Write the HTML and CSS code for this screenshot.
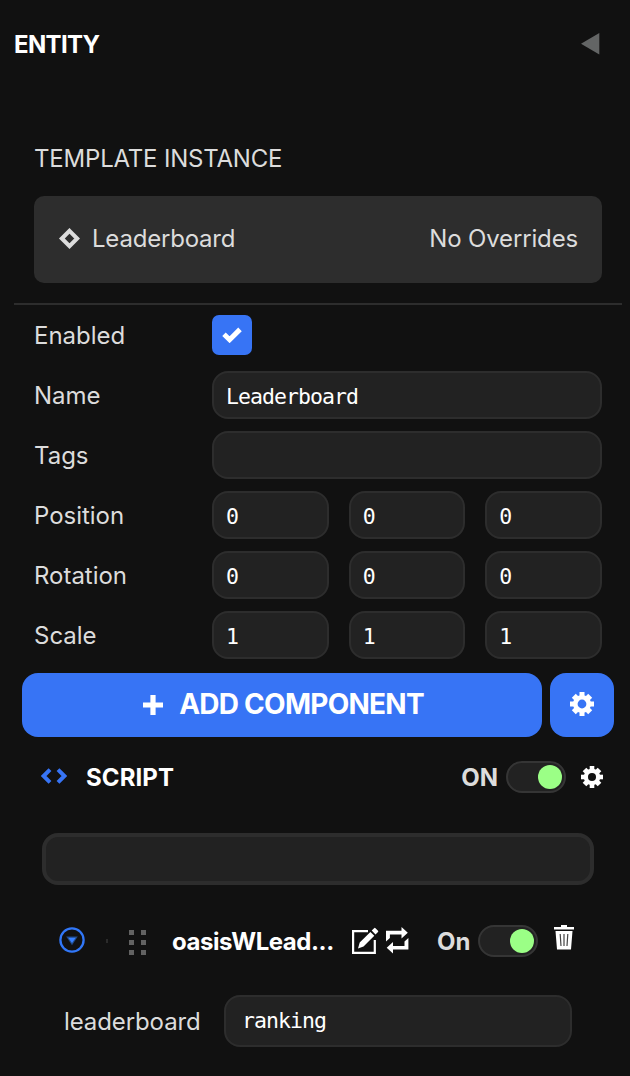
FILE: index.html
```html
<!DOCTYPE html>
<html lang="en">
<head>
<meta charset="utf-8">
<title>Entity</title>
<link rel="stylesheet" href="styles.css">
</head>
<body>
<svg class="defs" width="0" height="0" aria-hidden="true">
  <symbol id="gear" viewBox="-12 -12 24 24">
    <g fill="currentColor">
      <rect x="-2.5" y="-12" width="5" height="24"/>
      <rect x="-2.8" y="-11.6" width="5.6" height="23.2" transform="rotate(45)"/>
      <rect x="-2.5" y="-12" width="5" height="24" transform="rotate(90)"/>
      <rect x="-2.8" y="-11.6" width="5.6" height="23.2" transform="rotate(135)"/>
      <circle r="9"/>
    </g>
    <circle r="4.4" class="gear-hole"/>
  </symbol>
</svg>
<main class="panel">
  <header class="header">
    <h1 class="title">ENTITY</h1>
    <svg class="collapse" width="19" height="22" viewBox="0 0 19 22"><path d="M0 10.7 18.3 0V21.5Z" fill="#636565"/></svg>
  </header>

  <section class="template">
    <h2 class="template-title">TEMPLATE INSTANCE</h2>
    <div class="card">
      <svg class="diamond" width="22" height="22" viewBox="0 0 22 22"><path d="M11.5 2.85 19.15 10.5 11.5 18.15 3.85 10.5Z" fill="none" stroke="#dcdcdc" stroke-width="4.1"/></svg>
      <span class="card-name">Leaderboard</span>
      <span class="card-state">No Overrides</span>
    </div>
  </section>

  <section class="fields">
    <div class="row"><span class="label">Enabled</span><span class="check"><svg width="20" height="16" viewBox="0 0 20 16"><path d="M2 7.3 7.6 12.7 18 2.4" fill="none" stroke="#fff" stroke-width="5"/></svg></span></div>
    <div class="row"><span class="label">Name</span><span class="input">Leaderboard</span></div>
    <div class="row"><span class="label">Tags</span><span class="input"></span></div>
    <div class="row"><span class="label">Position</span><span class="input">0</span><span class="input">0</span><span class="input">0</span></div>
    <div class="row"><span class="label">Rotation</span><span class="input">0</span><span class="input">0</span><span class="input">0</span></div>
    <div class="row"><span class="label">Scale</span><span class="input">1</span><span class="input">1</span><span class="input">1</span></div>
  </section>

  <div class="actions">
    <div class="button add"><svg width="20" height="20" viewBox="0 0 20 20"><path d="M10 0V20M0 10H20" stroke="#fff" stroke-width="5.2"/></svg><span class="add-text">ADD COMPONENT</span></div>
    <div class="button cog"><svg width="24" height="24"><use href="#gear"/></svg></div>
  </div>

  <section class="component">
    <div class="component-head">
      <svg class="code" width="26" height="16" viewBox="0 0 26 16"><path d="M9 1.6 2.6 8 9 14.4M17 1.6 23.4 8 17 14.4" fill="none" stroke="#3774f5" stroke-width="4"/></svg>
      <span class="component-name">SCRIPT</span>
      <span class="state">ON</span>
      <span class="toggle"></span>
      <svg class="small-gear" width="22" height="22"><use href="#gear"/></svg>
    </div>
    <div class="script-search"></div>
    <div class="script-row">
      <svg class="expand" width="26" height="26" viewBox="0 0 26 26"><circle cx="13" cy="13" r="11.6" fill="none" stroke="#3177f8" stroke-width="2.3"/><path d="M7.2 9.5H18.8L13 18.2Z" fill="#204986"/><path d="M9.2 10.7H16.8L13 16Z" fill="#3780ff"/></svg>
      <span class="tick"></span>
      <svg class="grip" width="18" height="26" viewBox="0 0 18 26"><path d="M0 1h5v5H0zM12 1h5v5h-5zM0 11h5v5H0zM12 11h5v5h-5zM0 21h5v5H0zM12 21h5v5h-5z" fill="#626262"/></svg>
      <span class="script-name">oasisWLead...</span>
      <svg class="edit" width="27" height="28" viewBox="0 0 27 28"><path d="M16 4.1H1.1V25.9H22.8V13" fill="none" stroke="#fff" stroke-width="2.2"/><path d="M6 21.5 7.7 15.6 18.4 4.9 22.3 8.8 11.5 19.6ZM19.7 3.6 22.1 1.2Q22.8.5 23.5 1.2L26 3.7Q26.6 4.4 26 5L23.5 7.5Z" fill="#fff"/></svg>
      <svg class="reload" width="23" height="27" viewBox="0 0 23 27"><path d="M0 14.5V3.8H15.5V0L21.8 5.8 15.5 11.5V7.4H3.9V11ZM22.4 11V22.6H7V26.5L.7 20.8 7 15V19H18.5V14.5Z" fill="#fff"/></svg>
      <span class="state script-state">On</span>
      <span class="toggle"></span>
      <svg class="trash" width="20" height="25" viewBox="0 0 20 25"><path d="M0 2H7V0H13V2H20V4.5H0ZM1.5 6H18.5L17 24.5H3Z" fill="#fff"/><path d="M6.2 9 7 21M10 9V21M13.8 9 13 21" stroke="#444" stroke-width="1.2"/></svg>
    </div>
    <div class="attribute"><span class="attribute-name">leaderboard</span><span class="input">ranking</span></div>
  </section>
</main>
</body>
</html>
```
FILE: styles.css
```css
* { box-sizing: border-box; }
body { margin: 0; background: #111; color: #dcdcdc; font: 24px/30px Inter, sans-serif; }
svg { display: block; flex: none; }
.defs { position: absolute; }
.panel { width: 630px; height: 1076px; overflow: hidden; }
.header { display: flex; align-items: center; justify-content: space-between; height: 88px; padding: 0 30px 0 14px; }
.title { margin: 0; padding-top: 2px; color: #fff; font-size: 24px; font-weight: 750; letter-spacing: -.65px; }
.template { padding: 56px 28px 20px 34px; }
.template-title { margin: 0 0 22px; font-size: 24px; line-height: 30px; font-weight: 400; letter-spacing: -.2px; }
.card { display: flex; align-items: center; height: 87px; padding: 0 24px 2px; border-radius: 10px; background: #2d2d2d; }
.card-name { margin-left: 12px; letter-spacing: -.2px; }
.card-state { margin-left: auto; letter-spacing: -.15px; }
.fields { margin: 0 8px 0 14px; padding: 0 20px; border-top: 2px solid #2d2d2d; }
.row { display: flex; align-items: center; gap: 20px; height: 60px; }
.label { width: 158px; flex: none; padding-top: 2px; letter-spacing: -.02px; }
.check { display: flex; align-items: center; justify-content: center; width: 40px; height: 40px; border-radius: 7px; background: #3774f5; }
.input { flex: 1; display: flex; align-items: center; height: 48px; padding: 3px 12px 0; border: 2px solid #2d2d2d; border-radius: 16px; background: #222; color: #fff; font: 21.5px/26px "DejaVu Sans Mono", monospace; letter-spacing: -.94px; }
.actions { display: flex; gap: 8px; padding: 8px 16px 0 22px; }
.button { display: flex; align-items: center; justify-content: center; height: 64px; border-radius: 16px; background: #3774f5; color: #fff; }
.add { flex: 1; gap: 16px; padding-left: 3px; font-size: 28px; font-weight: 700; letter-spacing: -.75px; }
.add-text { padding-bottom: 3px; }
.cog { --hole: #3774f5; width: 64px; padding-bottom: 2px; }
.gear-hole { fill: var(--hole); }
.small-gear { --hole: #111; margin-left: 15px; color: #fff; }
.component-head { display: flex; align-items: center; height: 80px; padding: 0 27px 0 41px; }
.code { margin-bottom: 2px; }
.component-name { margin-left: 19px; padding-top: 1px; color: #fff; font-weight: 750; letter-spacing: .1px; }
.state { margin-left: auto; padding-top: 1px; font-weight: 700; }
.toggle { display: flex; justify-content: flex-end; width: 60px; height: 32px; margin-left: 8px; padding: 2px; border: 2px solid #353535; border-radius: 16px; background: #222; }
.toggle::after { content: ""; width: 24px; height: 24px; border-radius: 50%; background: #9bff86; }
.script-search { height: 52px; margin: 16px 36px 0 42px; border: 4px solid #2d2d2d; border-radius: 16px; background: #222; }
.script-row { display: flex; align-items: center; height: 112px; padding-left: 59px; color: #fff; }
.expand { margin-bottom: 2px; }
.tick { width: 2px; height: 4px; margin-left: 21px; background: #2b2b2b; }
.grip { margin: 2px 0 0 21px; }
.script-name { width: 166px; flex: none; margin-left: 25px; padding-top: 2px; font-weight: 750; letter-spacing: -.45px; }
.edit { margin-left: 14px; }
.reload { margin: 0 0 2px 7px; }
.script-state { margin-left: 28px; color: #dcdcdc; }
.trash { margin: 0 0 8px 16px; }
.attribute { display: flex; align-items: center; margin-top: -2px; padding: 0 58px 0 64px; }
.attribute-name { width: 160px; flex: none; padding-top: 2px; letter-spacing: -.1px; }
.attribute .input { height: 52px; padding: 0 12px 0 16px; }
```
